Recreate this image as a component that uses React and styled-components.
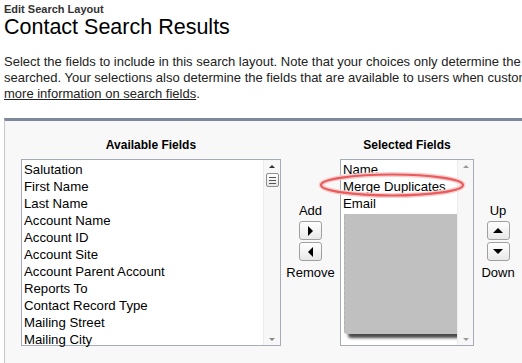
import React from "react";
import styled, { createGlobalStyle } from "styled-components";

const GlobalStyle = createGlobalStyle`
  body {
    margin: 0;
    background: #fff;
    font-family: "Liberation Sans", Arial, sans-serif;
    color: #000;
    overflow: hidden;
  }
`;

const Page = styled.div`
  padding: 3px 0 0 4px;
  width: 600px;
`;
const Breadcrumb = styled.div`
  font-size: 11px;
  font-weight: bold;
  color: #333;
  line-height: 12px;
`;
const Title = styled.h1`
  margin: 0;
  font-size: 21.5px;
  font-weight: normal;
  line-height: 25px;
`;
const Description = styled.p`
  margin: 14px 0 0;
  font-size: 13px;
  line-height: 16px;
  color: #222;
  white-space: nowrap;
  a {
    color: #222;
    text-decoration: underline;
  }
`;
const Panel = styled.div`
  margin-top: 16px;
  border-top: 3px solid #7d889c;
  border-left: 1px solid #c8c8c8;
  background: #f8f8f8;
  padding: 16px 0 20px 16px;
  display: flex;
  align-items: flex-start;
  height: 240px;
`;
const Column = styled.div`
  display: flex;
  flex-direction: column;
  align-items: center;
  width: ${(p) => p.$width}px;
`;
const Heading = styled.div`
  font-size: 12px;
  font-weight: bold;
  line-height: 16px;
  margin-bottom: 6px;
`;
const ListBox = styled.div`
  position: relative;
  display: flex;
  width: ${(p) => p.$width}px;
  height: 187px;
  border: 1px solid #a5acb5;
  background: #fff;
  box-sizing: border-box;
`;
const Items = styled.div`
  flex: 1;
  padding: 1px 0 0 2px;
`;
const Item = styled.div`
  font-size: 13.2px;
  line-height: 17px;
  white-space: nowrap;
`;
const Scrollbar = styled.div`
  width: 17px;
  background: #f7f7f7;
  border-left: 1px solid #ececec;
  display: flex;
  flex-direction: column;
  align-items: center;
  padding: 5px 0 4px;
  box-sizing: border-box;
`;
const Arrow = styled.div`
  width: 0;
  height: 0;
  border-left: 3px solid transparent;
  border-right: 3px solid transparent;
  ${(p) =>
    p.$up
      ? `border-bottom: 3px solid ${p.$color};`
      : `border-top: 3px solid ${p.$color};`}
`;
const Thumb = styled.div`
  margin-top: 5px;
  width: 11px;
  height: 12px;
  border: 1px solid #8e8e8e;
  border-radius: 2px;
  background: linear-gradient(#fdfdfd, #e6e6e6);
  display: flex;
  flex-direction: column;
  justify-content: center;
  align-items: center;
  gap: 2px;
  span {
    display: block;
    width: 7px;
    height: 1px;
    background: #555;
  }
`;
const Spacer = styled.div`
  flex: 1;
`;
const Controls = styled.div`
  display: flex;
  flex-direction: column;
  align-items: center;
  width: ${(p) => p.$width}px;
  padding-top: ${(p) => p.$top}px;
`;
const ControlLabel = styled.div`
  font-size: 13px;
  line-height: 15px;
  margin: ${(p) => p.$margin};
`;
const ArrowButton = styled.button`
  width: 23px;
  height: 19px;
  padding: 0;
  margin: 0 0 2px;
  border: 1px solid #a0a0a0;
  border-radius: 3px;
  background: linear-gradient(#ffffff, #e9e9e9);
  display: flex;
  align-items: center;
  justify-content: center;
`;
const Tri = styled.span`
  width: 0;
  height: 0;
  ${(p) =>
    p.$dir === "right"
      ? "border-top: 5px solid transparent; border-bottom: 5px solid transparent; border-left: 5px solid #000;"
      : p.$dir === "left"
      ? "border-top: 5px solid transparent; border-bottom: 5px solid transparent; border-right: 5px solid #000;"
      : p.$dir === "up"
      ? "border-left: 5px solid transparent; border-right: 5px solid transparent; border-bottom: 5px solid #000;"
      : "border-left: 5px solid transparent; border-right: 5px solid transparent; border-top: 5px solid #000;"}
`;
const Redacted = styled.div`
  margin: 2px 0 0 1px;
  width: 112px;
  height: 120px;
  background: #c0c0c0;
  border-left: 1px dashed #b0b0b0;
  border-radius: 0 0 0 3px;
  box-shadow: 4px 4px 3px #4a4a4a;
`;
const Highlight = styled.svg`
  position: absolute;
  left: -21px;
  top: 13px;
  overflow: visible;
`;

const available = [
  "Salutation",
  "First Name",
  "Last Name",
  "Account Name",
  "Account ID",
  "Account Site",
  "Account Parent Account",
  "Reports To",
  "Contact Record Type",
  "Mailing Street",
  "Mailing City",
];

const selected = ["Name", "Merge Duplicates", "Email"];

const App = () => {
  return (
    <Page>
      <GlobalStyle />
      <Breadcrumb>Edit Search Layout</Breadcrumb>
      <Title>Contact Search Results</Title>
      <Description>
        Select the fields to include in this search layout. Note that your choices only determine the
        fields displayed, not the fields searched.
        <br />
        searched. Your selections also determine the fields that are available to users when customizing
        their list views.
        <br />
        <a href="#">more information on search fields</a>.
      </Description>
      <Panel>
        <Column $width={260}>
          <Heading>Available Fields</Heading>
          <ListBox $width={260}>
            <Items>
              {available.map((f) => (
                <Item key={f}>{f}</Item>
              ))}
            </Items>
            <Scrollbar>
              <Arrow $up $color="#333" />
              <Thumb>
                <span />
                <span />
                <span />
              </Thumb>
              <Spacer />
              <Arrow $color="#888" />
            </Scrollbar>
          </ListBox>
        </Column>
        <Controls $width={59} $top={66}>
          <ControlLabel $margin="0 0 3px">Add</ControlLabel>
          <ArrowButton>
            <Tri $dir="right" />
          </ArrowButton>
          <ArrowButton>
            <Tri $dir="left" />
          </ArrowButton>
          <ControlLabel $margin="2px 0 0">Remove</ControlLabel>
        </Controls>
        <Column $width={134}>
          <Heading>Selected Fields</Heading>
          <ListBox $width={134}>
            <Items>
              {selected.map((f) => (
                <Item key={f}>{f}</Item>
              ))}
              <Redacted />
            </Items>
            <Scrollbar>
              <Arrow $up $color="#999" />
              <Spacer />
              <Arrow $color="#999" />
            </Scrollbar>
            <Highlight width="144" height="24">
              <ellipse cx="72" cy="12" rx="71" ry="10.5" fill="none" stroke="#f3d0d0" strokeWidth="5" />
              <ellipse cx="72" cy="12" rx="71" ry="10.5" fill="none" stroke="#ec5a5c" strokeWidth="2.2" />
            </Highlight>
          </ListBox>
        </Column>
        <Controls $width={48} $top={66}>
          <ControlLabel $margin="0 0 3px">Up</ControlLabel>
          <ArrowButton>
            <Tri $dir="up" />
          </ArrowButton>
          <ArrowButton>
            <Tri $dir="down" />
          </ArrowButton>
          <ControlLabel $margin="2px 0 0">Down</ControlLabel>
        </Controls>
      </Panel>
    </Page>
  );
};

export default App;
